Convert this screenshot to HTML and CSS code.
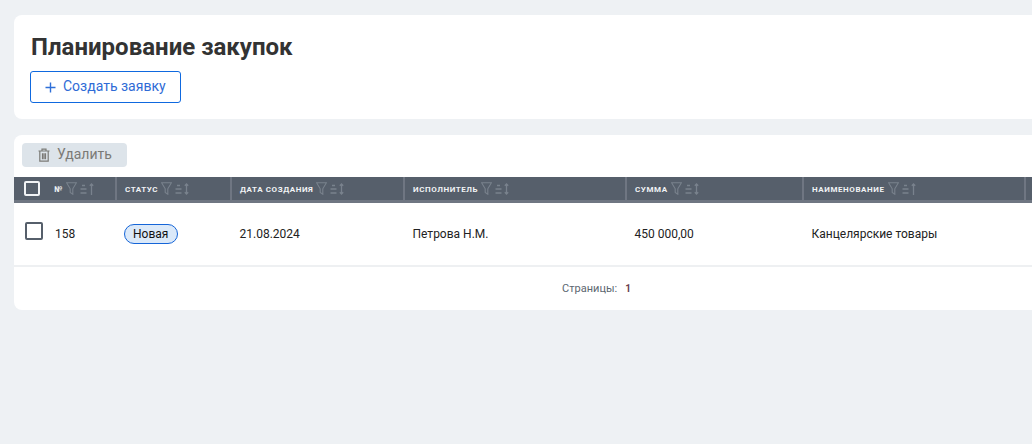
FILE: index.html
```html
<!DOCTYPE html>
<html lang="ru">
<head>
<meta charset="utf-8">
<title>Планирование закупок</title>
<link rel="stylesheet" href="styles.css">
</head>
<body>
<svg class="defs" width="0" height="0" aria-hidden="true">
  <symbol id="filter" viewBox="0 0 11 13"><path d="M.6.8h9.8L6.8 6.8v5.4L4.2 10.4V6.8z" fill="none" stroke="currentColor" stroke-width="1.1"/></symbol>
  <symbol id="sort" viewBox="0 0 14 12"><path d="M2 2.5h3M.5 6h6M.5 10h6" fill="none" stroke="currentColor" stroke-width="1.3"/><path d="M11.5 1v10M9.8 2.8 11.5 1l1.7 1.8M9.8 9.2l1.7 1.8 1.7-1.8" fill="none" stroke="currentColor" stroke-width="1.3"/></symbol>
  <symbol id="sort-up" viewBox="0 0 14 12"><path d="M2 2.5h3M.5 6h6M.5 10h6" fill="none" stroke="currentColor" stroke-width="1.3"/><path d="M11.5 1v11M9.8 2.8 11.5 1l1.7 1.8" fill="none" stroke="currentColor" stroke-width="1.3"/></symbol>
</svg>
<main class="page">
  <section class="card head-card">
    <h1 class="title">Планирование закупок</h1>
    <button class="btn-create" type="button">
      <svg class="plus" width="11" height="11" viewBox="0 0 11 11"><path d="M5.5.5v10M.5 5.5h10" fill="none" stroke="currentColor" stroke-width="1.4"/></svg>
      <span class="btn-text">Создать заявку</span>
    </button>
  </section>
  <section class="card table-card">
    <div class="toolbar">
      <button class="btn-delete" type="button">
        <svg width="12" height="14" viewBox="0 0 12 14"><path d="M.5 3h11M4 3V1.2h4V3M1.8 3v10.2h8.4V3M4.5 5.2v6M6 5.2v6M7.5 5.2v6" fill="none" stroke="currentColor" stroke-width="1.2"/></svg>
        <span class="btn-text">Удалить</span>
      </button>
    </div>
    <div class="row thead">
      <div class="th th-num"><span class="check check-head"></span><span class="th-label">№</span><svg class="ic-f"><use href="#filter"/></svg><svg class="ic-s"><use href="#sort-up"/></svg></div>
      <div class="th"><span class="th-label">Статус</span><svg class="ic-f"><use href="#filter"/></svg><svg class="ic-s"><use href="#sort"/></svg></div>
      <div class="th"><span class="th-label">Дата создания</span><svg class="ic-f"><use href="#filter"/></svg><svg class="ic-s"><use href="#sort"/></svg></div>
      <div class="th"><span class="th-label">Исполнитель</span><svg class="ic-f"><use href="#filter"/></svg><svg class="ic-s"><use href="#sort"/></svg></div>
      <div class="th"><span class="th-label">Сумма</span><svg class="ic-f"><use href="#filter"/></svg><svg class="ic-s"><use href="#sort"/></svg></div>
      <div class="th"><span class="th-label">Наименование</span><svg class="ic-f"><use href="#filter"/></svg><svg class="ic-s"><use href="#sort-up"/></svg></div>
      <div class="th th-last"></div>
    </div>
    <div class="row tbody">
      <div class="td td-num"><span class="check"></span><span>158</span></div>
      <div class="td"><span class="badge">Новая</span></div>
      <div class="td">21.08.2024</div>
      <div class="td">Петрова Н.М.</div>
      <div class="td">450 000,00</div>
      <div class="td">Канцелярские товары</div>
      <div class="td"></div>
    </div>
    <div class="pager"><span>Страницы:</span><b class="page-num">1</b></div>
  </section>
</main>
</body>
</html>
```
FILE: styles.css
```css
* { box-sizing: border-box; }
html, body { margin: 0; height: 100%; overflow: hidden; }
body { background: #eef1f4; font-family: Roboto, "Liberation Sans", sans-serif; }
.defs { position: absolute; }
.page { padding: 15px 0 0 14px; display: flex; flex-direction: column; gap: 16px; }
.card { background: #fff; border-radius: 8px 0 0 8px; }
.head-card { height: 104px; padding: 16px 16px 0; }
.title { margin: 0; padding-left: 1px; font-size: 24px; line-height: 32px; font-weight: 700; color: #333; }
.btn-create { margin-top: 8px; width: 151px; height: 32px; padding: 0 0 0 14px; display: flex; align-items: center; gap: 7px; background: #fff; border: 1px solid #0f69df; border-radius: 3px; color: #2f6bd6; font: 400 14px Roboto, sans-serif; }
.btn-text { padding-bottom: 2px; }
.plus { color: #2f6fd8; }
.table-card { height: 175px; }
.toolbar { height: 42px; padding: 8px 8px 0; }
.btn-delete { width: 105px; height: 24px; padding: 0 0 0 16px; display: flex; align-items: center; gap: 7px; background: #dde4ea; border: 0; border-radius: 4px; color: #7b7a76; font: 400 14px Roboto, sans-serif; }
.row { display: grid; grid-template-columns: 103px 115px 173px 222px 177px 222px 1fr; }
.thead { height: 26px; background: #565f6b; border-bottom: 3px solid #6f7682; }
.th { display: flex; align-items: center; gap: 3px; padding: 0 0 0 8px; border-right: 2px solid #6f7682; color: #79828d; }
.th-num { padding-left: 10px; }
.th-last { border-right: 0; }
.th-label { padding-top: 1px; font-size: 8px; font-weight: 700; text-transform: uppercase; color: #f1f3f5; letter-spacing: .58px; }
.ic-f { width: 11px; height: 13px; }
.ic-s { width: 14px; height: 12px; }
.check { display: block; flex: none; width: 18px; height: 18px; margin-top: -6px; border: 2px solid #565f6b; border-radius: 2px; background: #fff; }
.check-head { width: 16px; height: 15px; margin: 0 11px 0 0; border-color: #f1f3f5; background: transparent; }
.tbody { height: 64px; border-bottom: 2px solid #eef0f2; font-size: 12px; color: #222; }
.td { display: flex; align-items: center; padding-left: 7.5px; }
.td-num { padding-left: 11px; gap: 12px; }
.badge { height: 20px; margin-left: -1px; padding: 0 8.5px; display: flex; align-items: center; background: #dbe9f9; border: 1px solid #1565d8; border-radius: 10px; font-size: 12px; color: #111; }
.pager { display: flex; justify-content: center; align-items: center; gap: 8px; height: 42px; padding: 1px 0 0 147px; font-size: 11px; color: #5c6670; }
.page-num { color: #6b3f50; font-weight: 700; font-size: 10px; }
```
